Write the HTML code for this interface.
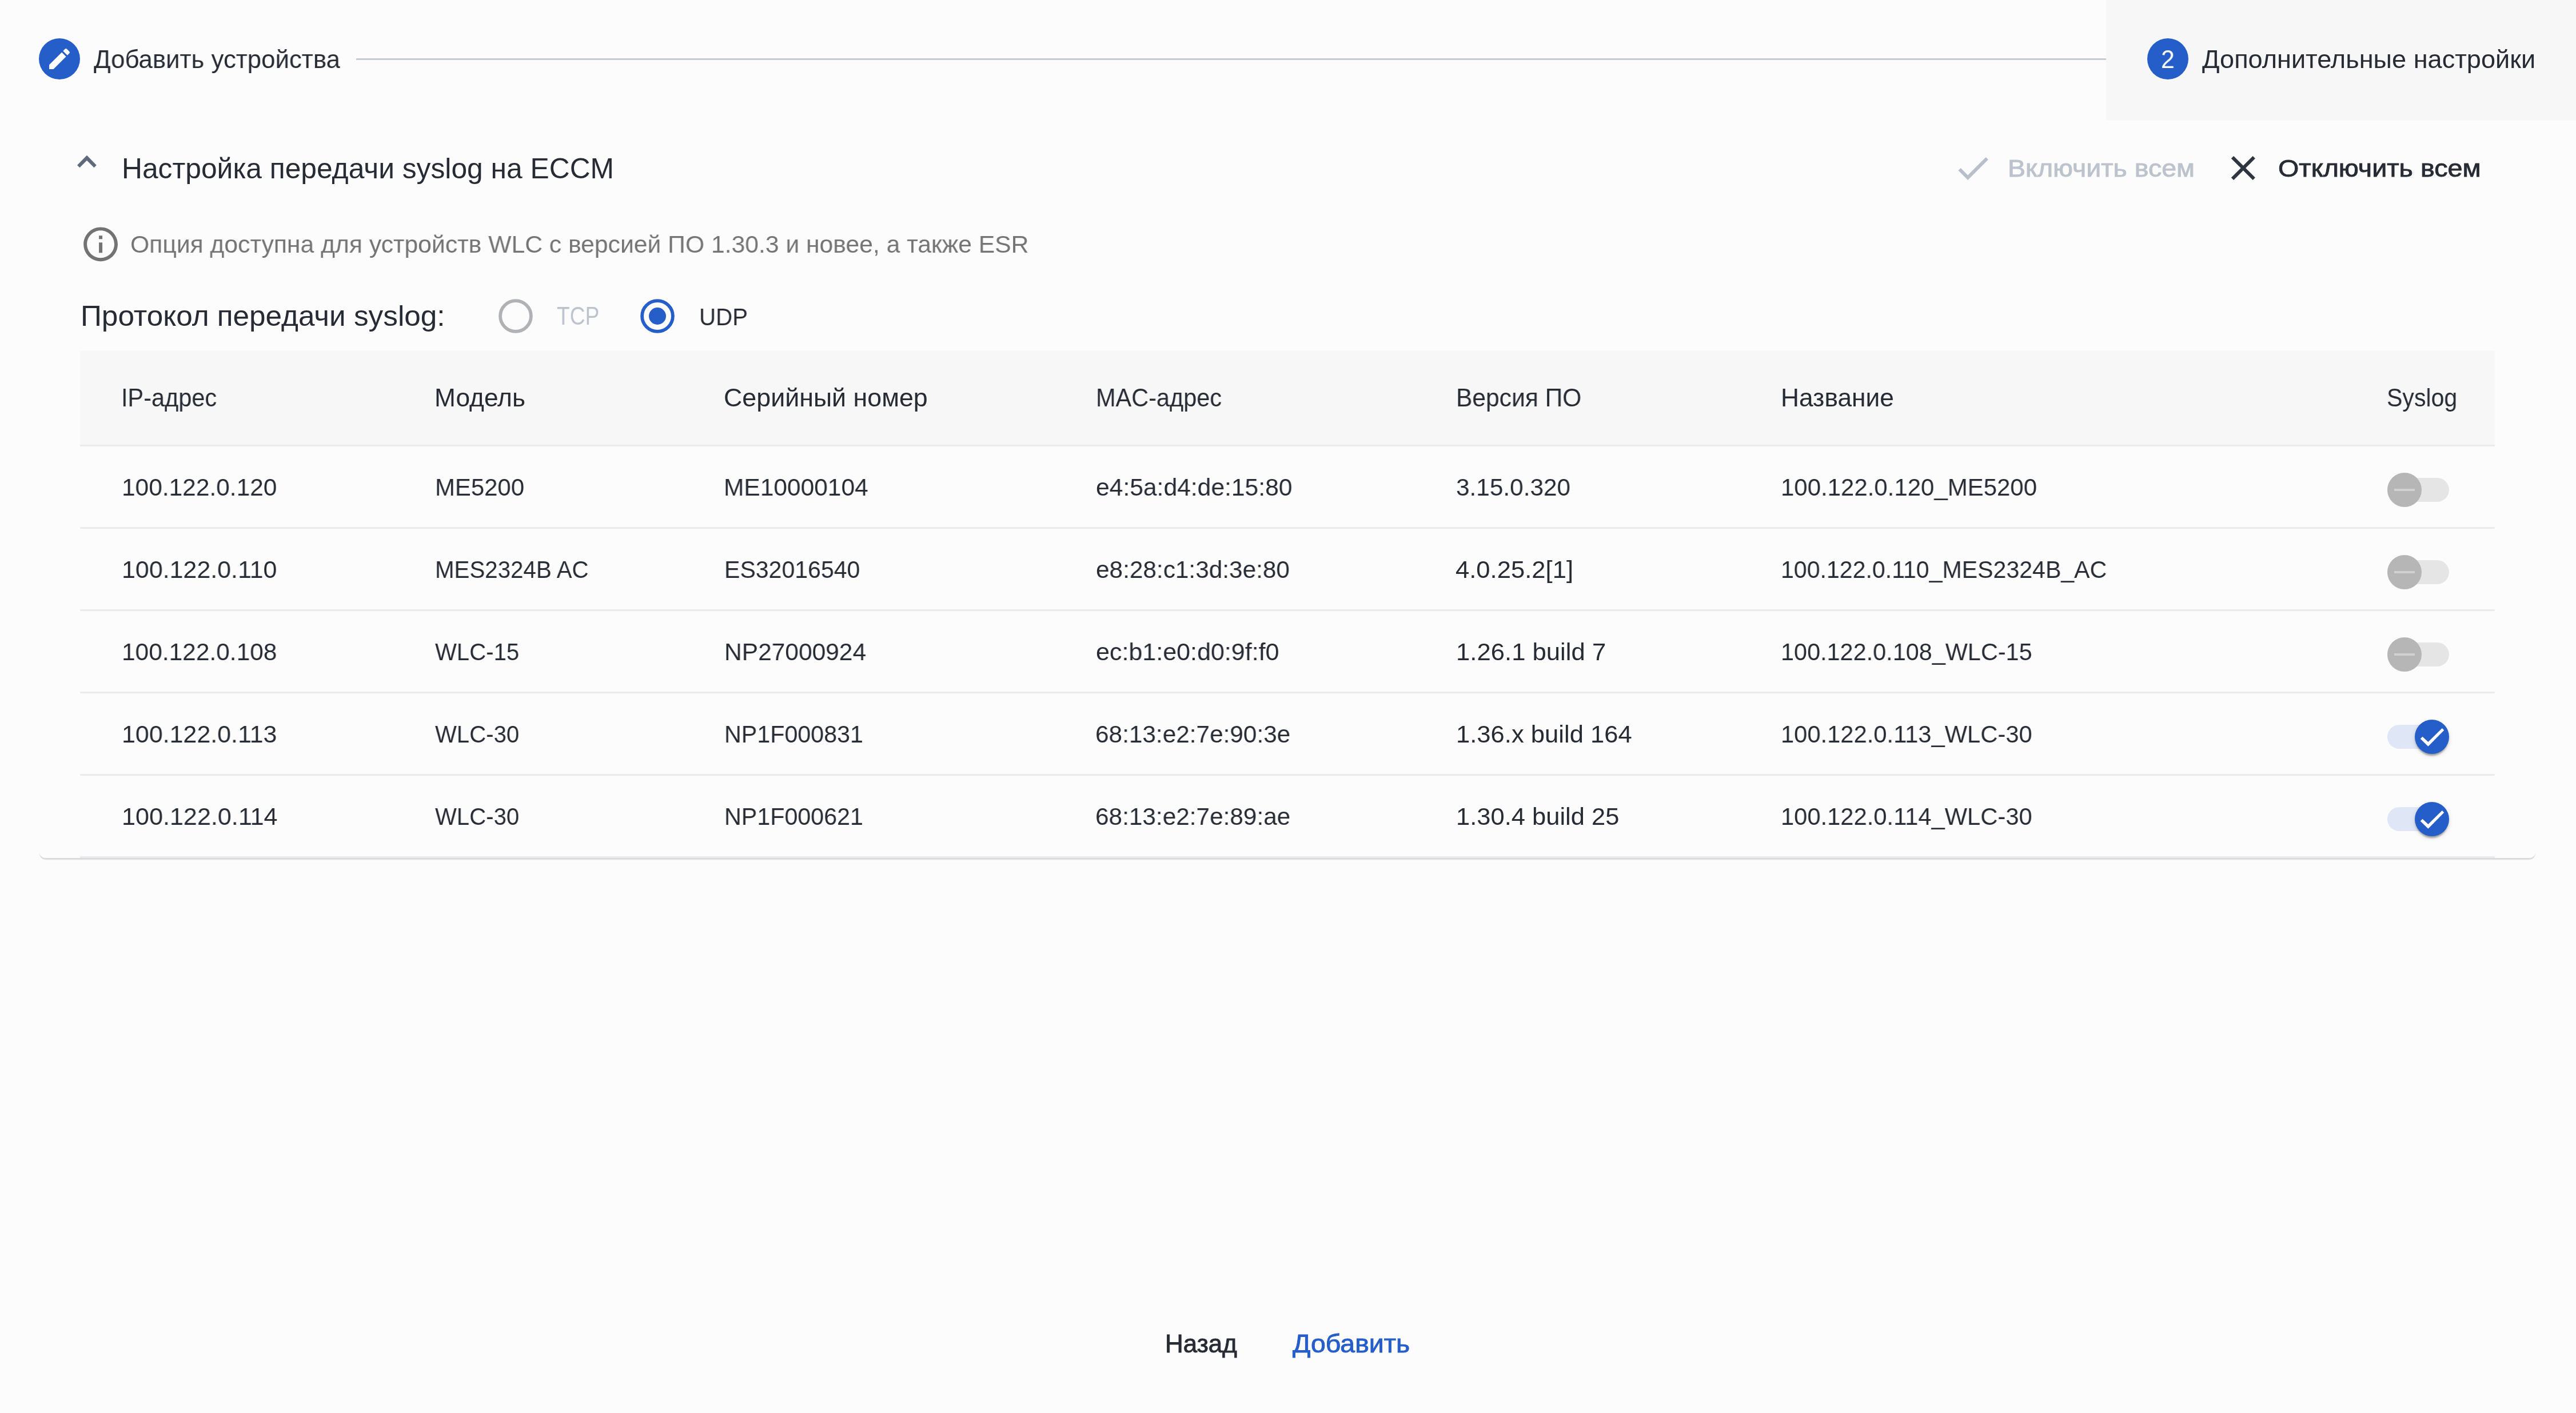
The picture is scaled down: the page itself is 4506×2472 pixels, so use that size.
<!DOCTYPE html>
<html lang="ru"><head><meta charset="utf-8"><title>ECCM</title>
<style>
html,body{margin:0;padding:0}
body{width:4506px;height:2472px;overflow:hidden;background:#fcfcfc;position:relative;font-family:"Liberation Sans",sans-serif}
.t{position:absolute;white-space:nowrap;line-height:1;transform-origin:0 0;will-change:transform;font-family:"Liberation Sans",sans-serif}
.r{position:absolute}
svg{position:absolute;left:0;top:0}
.trk{position:absolute;left:4176px;width:108px;height:42px;border-radius:21px}
.knob{position:absolute;width:60px;height:60px;border-radius:50%}
</style></head><body>
<div class="r" style="left:3684px;top:0;width:822px;height:211px;background:#f7f7f7"></div>
<div class="r" style="left:623px;top:102px;width:3061px;height:3px;background:#c6cbd5"></div>
<div class="r" style="left:68px;top:1400px;width:4368px;height:101px;border-radius:0 0 12px 12px;box-shadow:0 4px 1px -1px rgba(0,0,0,.13);background:#fcfcfc"></div>
<div class="r" style="left:140px;top:613px;width:4224px;height:165px;background:#f7f7f7"></div>
<div class="r" style="left:140px;top:778px;width:4224px;height:3px;background:#e9ebf0"></div>
<div class="r" style="left:140px;top:922px;width:4224px;height:3px;background:#e9ebf0"></div>
<div class="r" style="left:140px;top:1066px;width:4224px;height:3px;background:#e9ebf0"></div>
<div class="r" style="left:140px;top:1210px;width:4224px;height:3px;background:#e9ebf0"></div>
<div class="r" style="left:140px;top:1354px;width:4224px;height:3px;background:#e9ebf0"></div>
<div class="r" style="left:140px;top:1498px;width:4224px;height:3px;background:#e9ebf0"></div>

<!-- toggles -->
<div class="trk" style="top:836px;background:#e5e5e5"></div>
<div class="knob" style="left:4176px;top:827px;background:#b6b6b6"></div>
<div class="r" style="left:4188px;top:854.8px;width:36px;height:4.4px;background:#d0d0d0"></div>
<div class="trk" style="top:980px;background:#e5e5e5"></div>
<div class="knob" style="left:4176px;top:971px;background:#b6b6b6"></div>
<div class="r" style="left:4188px;top:998.8px;width:36px;height:4.4px;background:#d0d0d0"></div>
<div class="trk" style="top:1124px;background:#e5e5e5"></div>
<div class="knob" style="left:4176px;top:1115px;background:#b6b6b6"></div>
<div class="r" style="left:4188px;top:1142.8px;width:36px;height:4.4px;background:#d0d0d0"></div>
<div class="trk" style="top:1268px;background:#dfe6f5"></div>
<div class="knob" style="left:4224px;top:1259px;background:#265ec9;box-shadow:0 6px 3px -3px rgba(0,0,0,.2),0 3px 3px 0 rgba(0,0,0,.14),0 3px 9px 0 rgba(0,0,0,.12)"></div>
<div class="trk" style="top:1412px;background:#dfe6f5"></div>
<div class="knob" style="left:4224px;top:1403px;background:#265ec9;box-shadow:0 6px 3px -3px rgba(0,0,0,.2),0 3px 3px 0 rgba(0,0,0,.14),0 3px 9px 0 rgba(0,0,0,.12)"></div>

<svg width="4506" height="2472" viewBox="0 0 4506 2472">
  <circle cx="104" cy="103" r="36" fill="#265ec9"/>
  <path transform="translate(80 79) scale(2)" fill="#ffffff" d="M3 17.25V21h3.75L17.81 9.94l-3.75-3.75L3 17.25zM20.71 7.04c.39-.39.39-1.02 0-1.41l-2.34-2.34c-.39-.39-1.02-.39-1.41 0l-1.83 1.83 3.75 3.75 1.83-1.830z"/>
  <circle cx="3792" cy="103" r="36" fill="#265ec9"/>
  <polygon fill="#5f6b7d" points="135.04,288.97 151.95,271.8 168.8,289 164.5,293.2 151.95,280.65 139.4,293.2"/>
  <path transform="translate(3415.4 258.4) scale(2.975)" fill="#b8bfca" d="M9 16.17L4.83 12l-1.42 1.41L9 19 21 7l-1.41-1.41z"/>
  <path transform="translate(3887.9 258) scale(3)" fill="#2e3440" d="M19 6.41L17.59 5 12 10.59 6.41 5 5 6.41 10.59 12 5 17.59 6.41 19 12 13.41 17.59 19 19 17.59 13.41 12z"/>
  <path transform="translate(140.2 391.4) scale(2.99)" fill="#737373" d="M11 7h2v2h-2zm0 4h2v6h-2zm1-9C6.48 2 2 6.48 2 12s4.48 10 10 10 10-4.48 10-10S17.52 2 12 2zm0 18c-4.41 0-8-3.590-8-8s3.59-8 8-8 8 3.59 8 8-3.59 8-8 8z"/>
  <circle cx="902" cy="553" r="26.9" fill="none" stroke="#b0b2b6" stroke-width="5.8"/>
  <circle cx="1150" cy="553" r="26.9" fill="none" stroke="#265ec9" stroke-width="5.8"/>
  <circle cx="1150" cy="553" r="15" fill="#265ec9"/>
  <polygon fill="#ffffff" points="4233.7,1292.5 4237.5,1288.7 4247.4,1298.0 4271.8,1273.9 4275.3,1277.4 4247.4,1305.7"/>
  <polygon fill="#ffffff" points="4233.7,1436.6 4237.5,1432.8 4247.4,1442.1 4271.8,1418.0 4275.3,1421.5 4247.4,1449.8"/>
</svg>
<div class="t" style="left:163.90px;top:81.76px;font-size:44.33px;color:#262b34;transform:scaleX(0.9869)">Добавить устройства</div>
<div class="t" style="left:3852.00px;top:81.69px;font-size:44.19px;color:#262b34;transform:scaleX(1.0209)">Дополнительные настройки</div>
<div class="t" style="left:3779.77px;top:81.76px;font-size:44.33px;color:#ffffff;transform:scaleX(0.9667)">2</div>
<div class="t" style="left:212.87px;top:270.06px;font-size:49.42px;color:#262b34;transform:scaleX(1.0070)">Настройка передачи syslog на ECCM</div>
<div class="t" style="left:3512.25px;top:273.25px;font-size:43.17px;color:#bcc3cd;transform:scaleX(1.0784);-webkit-text-stroke:0.9px #bcc3cd">Включить всем</div>
<div class="t" style="left:3984.52px;top:273.25px;font-size:43.17px;color:#262b34;transform:scaleX(1.0816);-webkit-text-stroke:0.9px #262b34">Отключить всем</div>
<div class="t" style="left:227.72px;top:406.35px;font-size:43.17px;color:#747474;transform:scaleX(0.9885)">Опция доступна для устройств WLC с версией ПО 1.30.3 и новее, а также ESR</div>
<div class="t" style="left:141.42px;top:529.20px;font-size:49.13px;color:#262b34;transform:scaleX(1.0440)">Протокол передачи syslog:</div>
<div class="t" style="left:973.80px;top:532.08px;font-size:43.61px;color:#bcc3cd;transform:scaleX(0.8507)">TCP</div>
<div class="t" style="left:1223.29px;top:532.50px;font-size:42.88px;color:#262b34;transform:scaleX(0.9383)">UDP</div>
<div class="t" style="left:211.80px;top:674.88px;font-size:43.61px;color:#262b34;transform:scaleX(0.9504)">IP-адрес</div>
<div class="t" style="left:760.35px;top:674.88px;font-size:43.61px;color:#262b34;transform:scaleX(1.0161)">Модель</div>
<div class="t" style="left:1266.05px;top:674.88px;font-size:43.61px;color:#262b34;transform:scaleX(1.0268)">Серийный номер</div>
<div class="t" style="left:1916.95px;top:674.88px;font-size:43.61px;color:#262b34;transform:scaleX(0.9501)">MAC-адрес</div>
<div class="t" style="left:2546.87px;top:674.88px;font-size:43.61px;color:#262b34;transform:scaleX(0.9760)">Версия ПО</div>
<div class="t" style="left:3114.65px;top:674.88px;font-size:43.61px;color:#262b34;transform:scaleX(1.0154)">Название</div>
<div class="t" style="left:4175.16px;top:674.88px;font-size:43.61px;color:#262b34;transform:scaleX(0.9404)">Syslog</div>
<div class="t" style="left:212.86px;top:831.13px;font-size:43.31px;color:#262b34;transform:scaleX(0.9802)">100.122.0.120</div>
<div class="t" style="left:760.50px;top:831.13px;font-size:43.31px;color:#262b34;transform:scaleX(0.9677)">ME5200</div>
<div class="t" style="left:1266.16px;top:831.13px;font-size:43.31px;color:#262b34;transform:scaleX(0.9811)">ME10000104</div>
<div class="t" style="left:1917.42px;top:831.13px;font-size:43.31px;color:#262b34;transform:scaleX(0.9838)">e4:5a:d4:de:15:80</div>
<div class="t" style="left:2546.72px;top:831.13px;font-size:43.31px;color:#262b34;transform:scaleX(0.9775)">3.15.0.320</div>
<div class="t" style="left:3114.79px;top:831.13px;font-size:43.31px;color:#262b34;transform:scaleX(0.9693)">100.122.0.120_ME5200</div>
<div class="t" style="left:212.82px;top:975.13px;font-size:43.31px;color:#262b34;transform:scaleX(0.9919)">100.122.0.110</div>
<div class="t" style="left:760.61px;top:975.13px;font-size:43.31px;color:#262b34;transform:scaleX(0.9298)">MES2324B AC</div>
<div class="t" style="left:1266.66px;top:975.13px;font-size:43.31px;color:#262b34;transform:scaleX(0.9480)">ES32016540</div>
<div class="t" style="left:1917.42px;top:975.13px;font-size:43.31px;color:#262b34;transform:scaleX(0.9777)">e8:28:c1:3d:3e:80</div>
<div class="t" style="left:2545.99px;top:975.13px;font-size:43.31px;color:#262b34;transform:scaleX(1.0070)">4.0.25.2[1]</div>
<div class="t" style="left:3114.85px;top:975.13px;font-size:43.31px;color:#262b34;transform:scaleX(0.9488)">100.122.0.110_MES2324B_AC</div>
<div class="t" style="left:212.86px;top:1119.13px;font-size:43.31px;color:#262b34;transform:scaleX(0.9802)">100.122.0.108</div>
<div class="t" style="left:760.80px;top:1119.13px;font-size:43.31px;color:#262b34;transform:scaleX(0.9264)">WLC-15</div>
<div class="t" style="left:1266.56px;top:1119.13px;font-size:43.31px;color:#262b34;transform:scaleX(0.9815)">NP27000924</div>
<div class="t" style="left:1917.41px;top:1119.13px;font-size:43.31px;color:#262b34;transform:scaleX(0.9935)">ec:b1:e0:d0:9f:f0</div>
<div class="t" style="left:2547.07px;top:1119.13px;font-size:43.31px;color:#262b34;transform:scaleX(1.0086)">1.26.1 build 7</div>
<div class="t" style="left:3114.83px;top:1119.13px;font-size:43.31px;color:#262b34;transform:scaleX(0.9562)">100.122.0.108_WLC-15</div>
<div class="t" style="left:212.82px;top:1263.13px;font-size:43.31px;color:#262b34;transform:scaleX(0.9919)">100.122.0.113</div>
<div class="t" style="left:760.80px;top:1263.13px;font-size:43.31px;color:#262b34;transform:scaleX(0.9264)">WLC-30</div>
<div class="t" style="left:1266.64px;top:1263.13px;font-size:43.31px;color:#262b34;transform:scaleX(0.9521)">NP1F000831</div>
<div class="t" style="left:1916.45px;top:1263.13px;font-size:43.31px;color:#262b34;transform:scaleX(0.9774)">68:13:e2:7e:90:3e</div>
<div class="t" style="left:2547.08px;top:1263.13px;font-size:43.31px;color:#262b34;transform:scaleX(1.0068)">1.36.x build 164</div>
<div class="t" style="left:3114.81px;top:1263.13px;font-size:43.31px;color:#262b34;transform:scaleX(0.9630)">100.122.0.113_WLC-30</div>
<div class="t" style="left:212.81px;top:1407.13px;font-size:43.31px;color:#262b34;transform:scaleX(0.9960)">100.122.0.114</div>
<div class="t" style="left:760.80px;top:1407.13px;font-size:43.31px;color:#262b34;transform:scaleX(0.9264)">WLC-30</div>
<div class="t" style="left:1266.64px;top:1407.13px;font-size:43.31px;color:#262b34;transform:scaleX(0.9521)">NP1F000621</div>
<div class="t" style="left:1916.45px;top:1407.13px;font-size:43.31px;color:#262b34;transform:scaleX(0.9774)">68:13:e2:7e:89:ae</div>
<div class="t" style="left:2547.09px;top:1407.13px;font-size:43.31px;color:#262b34;transform:scaleX(1.0047)">1.30.4 build 25</div>
<div class="t" style="left:3114.81px;top:1407.13px;font-size:43.31px;color:#262b34;transform:scaleX(0.9630)">100.122.0.114_WLC-30</div>
<div class="t" style="left:2038.02px;top:2330.10px;font-size:43.46px;color:#262b34;transform:scaleX(1.0111);-webkit-text-stroke:0.9px #262b34">Назад</div>
<div class="t" style="left:2261.48px;top:2330.10px;font-size:43.46px;color:#265ec9;transform:scaleX(1.0685);-webkit-text-stroke:0.9px #265ec9">Добавить</div>
</body></html>
